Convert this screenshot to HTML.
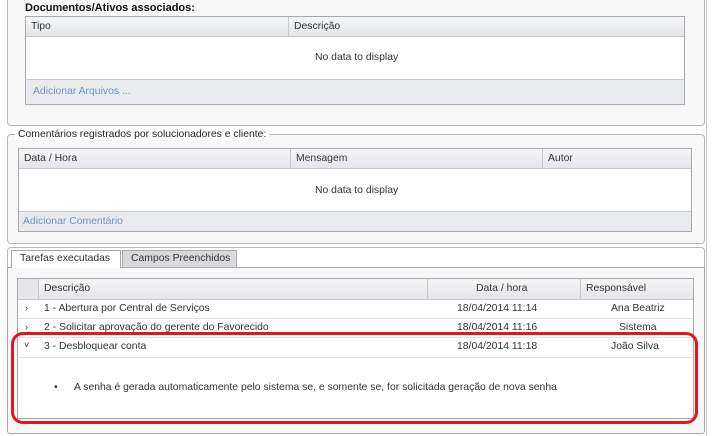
<!DOCTYPE html>
<html><head><meta charset="utf-8"><style>
*{box-sizing:border-box;margin:0;padding:0}
body{width:712px;height:436px;background:#fff;font-family:"Liberation Sans",Arial,sans-serif;font-size:10.4px;color:#333;position:relative;overflow:hidden}
.a{position:absolute}
.panel{border:1px solid #b8b8b8;border-radius:4px;background:#f8f8f8}
.tbl{border:1px solid #a8a8a8;background:#fff}
.hdr{background:linear-gradient(#f4f5f7,#e4e6ea);border-bottom:1px solid #c8c8c8;height:20px}
.ftr{background:#e8eaee;border-top:1px solid #c8c8c8}
.t{position:absolute;white-space:nowrap}
.link{color:#6f94c7}
.vl{position:absolute;top:0;width:1px;height:20px;background:#c8c8c8}
.row{position:absolute;left:0;right:0;border-bottom:1px solid #e4e4e4;height:19px}
</style></head><body>
<div class="a" style="left:706px;top:0;width:1px;height:436px;background:#c8c8c8"></div>
<div class="a panel" style="left:7px;top:-4px;width:698px;height:130px"></div>
<div class="t" style="left:25px;top:2px;font-weight:bold;color:#111;font-size:11px">Documentos/Ativos associados:</div>
<div class="a tbl" style="left:25px;top:16px;width:660px;height:89px">
 <div class="hdr"></div><div class="vl" style="left:262px"></div>
 <div class="t" style="left:5px;top:4px">Tipo</div><div class="t" style="left:268px;top:4px">Descrição</div>
 <div class="t" style="left:289px;top:35px">No data to display</div>
 <div class="a ftr" style="left:0;right:0;top:62px;height:25px"></div>
 <div class="t link" style="left:7px;top:69px">Adicionar Arquivos ...</div>
</div>
<div class="a panel" style="left:7px;top:134px;width:698px;height:110px"></div>
<div class="t" style="left:15px;top:129px;background:#fff;padding:0 3px;color:#222">Comentários registrados por solucionadores e cliente:</div>
<div class="a tbl" style="left:18px;top:148px;width:674px;height:84px">
 <div class="hdr"></div><div class="vl" style="left:271px"></div><div class="vl" style="left:523px"></div>
 <div class="t" style="left:5px;top:4px">Data / Hora</div><div class="t" style="left:277px;top:4px">Mensagem</div><div class="t" style="left:529px;top:4px">Autor</div>
 <div class="t" style="left:296px;top:36px">No data to display</div>
 <div class="a ftr" style="left:0;right:0;top:62px;height:20px"></div>
 <div class="t link" style="left:4px;top:67px">Adicionar Comentário</div>
</div>
<div class="a panel" style="left:7px;top:247px;width:698px;height:187px;background:#fff"></div>
<div class="a" style="top:267px;height:167px;border:1px solid #a8a8a8;border-radius:0 0 3px 3px;background:#f8f8f8;left:7px;width:698px"></div>
<div class="a" style="left:11px;top:250px;width:110px;height:18px;background:#fff;border:1px solid #a8a8a8;border-bottom:none"></div>
<div class="t" style="left:20px;top:253px">Tarefas executadas</div>
<div class="a" style="left:122px;top:250px;width:115px;height:17px;background:#d8d9dc;border:1px solid #a8a8a8;border-bottom:none"></div>
<div class="t" style="left:131px;top:253px">Campos Preenchidos</div>
<div class="a tbl" style="left:17px;top:278px;width:677px;height:141px">
 <div class="hdr" style="height:21px"></div>
 <div class="a" style="left:0;top:0;width:20px;height:20px;background:#e4e6ea"></div>
 <div class="vl" style="left:20px"></div><div class="vl" style="left:409px"></div><div class="vl" style="left:562px"></div>
 <div class="t" style="left:26px;top:4px">Descrição</div><div class="t" style="left:458px;top:4px">Data / hora</div><div class="t" style="left:568px;top:4px">Responsável</div>
 <div class="row" style="top:21px"></div><div class="row" style="top:40px"></div><div class="row" style="top:59px;height:20px"></div>
 <div class="t" style="left:7px;top:24px;font-size:9px">›</div><div class="t" style="left:26px;top:24px">1 - Abertura por Central de Serviços</div><div class="t" style="left:439px;top:24px">18/04/2014 11:14</div><div class="t" style="left:593px;top:24px">Ana Beatriz</div>
 <div class="t" style="left:7px;top:43px;font-size:9px">›</div><div class="t" style="left:26px;top:43px">2 - Solicitar aprovação do gerente do Favorecido</div><div class="t" style="left:439px;top:43px">18/04/2014 11:16</div><div class="t" style="left:601px;top:43px">Sistema</div>
 <div class="t" style="left:6px;top:61px;font-size:9px">˅</div><div class="t" style="left:26px;top:62px">3 - Desbloquear conta</div><div class="t" style="left:439px;top:62px">18/04/2014 11:18</div><div class="t" style="left:593px;top:62px">João Silva</div>
 <div class="t" style="left:36px;top:103px">•</div>
 <div class="t" style="left:56px;top:103px">A senha é gerada automaticamente pelo sistema se, e somente se, for solicitada geração de nova senha</div>
</div>
<div class="a" style="left:11px;top:332px;width:687px;height:92px;border:3px solid #e8141a;border-radius:12px"></div>
</body></html>
